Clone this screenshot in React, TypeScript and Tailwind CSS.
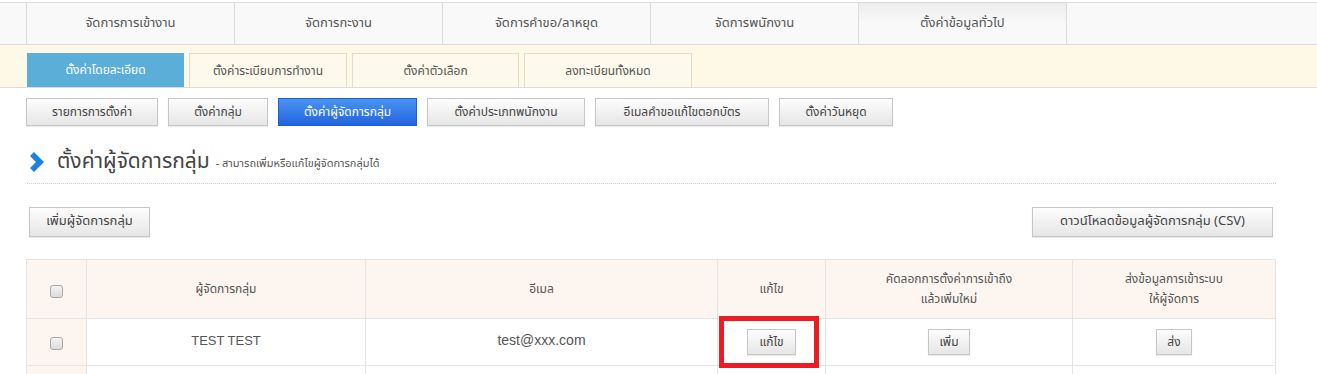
const mainTabs = [
  'จัดการการเข้างาน',
  'จัดการกะงาน',
  'จัดการคำขอ/ลาหยุด',
  'จัดการพนักงาน',
  'ตั้งค่าข้อมูลทั่วไป',
];

const subTabs = ['ตั้งค่าโดยละเอียด', 'ตั้งค่าระเบียบการทำงาน', 'ตั้งค่าตัวเลือก', 'ลงทะเบียนทั้งหมด'];
const subWidths = ['w-[157px]', 'w-[158px]', 'w-[167px]', 'w-[168px]'];

const settingBtns = [
  { label: 'รายการการตั้งค่า', w: 'w-[132px]' },
  { label: 'ตั้งค่ากลุ่ม', w: 'w-[100px]' },
  { label: 'ตั้งค่าผู้จัดการกลุ่ม', w: 'w-[139px]', active: true },
  { label: 'ตั้งค่าประเภทพนักงาน', w: 'w-[158px]' },
  { label: 'อีเมลคำขอแก้ไขตอกบัตร', w: 'w-[174px]' },
  { label: 'ตั้งค่าวันหยุด', w: 'w-[114px]' },
];

const grayBtn =
  'border border-[#c6c6c6] bg-gradient-to-b from-[#fdfdfd] to-[#e6e6e6] text-[#444] shadow-[0_1px_1px_rgba(0,0,0,0.08)]';

function Checkbox() {
  return (
    <span className="inline-block w-[13px] h-[13px] rounded-[3px] border border-[#a8a8a8] bg-gradient-to-b from-[#f4f4f4] to-[#dcdcdc]" />
  );
}

export default function App() {
  return (
    <div
      className="w-[1317px] h-[374px] overflow-hidden bg-white text-[#555]"
      style={{ fontFamily: 'Tahoma, "Noto Sans Thai", "Noto Sans", sans-serif' }}
    >
      {/* main tabs */}
      <div className="mt-[2px] h-[43px] border-t border-b border-[#dcdcdc] bg-[#f9f9f9] flex pl-[26px]">
        {mainTabs.map((t, i) => (
          <div
            key={t}
            className={`h-full flex items-center justify-center text-[13px] border-l border-[#dcdcdc] ${
              i === 4
                ? 'w-[209px] border-r bg-gradient-to-b from-[#ececec] to-[#f9f9f9] via-[#f9f9f9]'
                : 'w-[208px]'
            }`}
          >
            {t}
          </div>
        ))}
      </div>

      {/* sub tabs */}
      <div className="h-[43px] bg-[#fef8e7] border-b border-[#dcdcdc] flex items-end gap-[5px] pl-[27px]">
        {subTabs.map((t, i) => (
          <div
            key={t}
            className={`${subWidths[i]} h-[34px] flex items-center justify-center text-[12px] ${
              i === 0
                ? 'bg-[#5aaed8] text-white'
                : 'bg-[#fdf9ec] border border-b-0 border-[#e2dccb] text-[#555]'
            }`}
          >
            {t}
          </div>
        ))}
      </div>

      {/* setting buttons */}
      <div className="flex gap-[10px] pl-[26px] mt-[10px]">
        {settingBtns.map((b) => (
          <div
            key={b.label}
            className={`${b.w} h-[28px] flex items-center justify-center text-[12px] ${
              b.active
                ? 'border border-[#1d5fd3] bg-gradient-to-b from-[#4a94f2] to-[#2463de] text-white'
                : grayBtn
            }`}
          >
            {b.label}
          </div>
        ))}
      </div>

      {/* heading */}
      <div className="mx-[27px] w-[1249px] mt-[22px] pb-[7px] border-b border-dotted border-[#cfcfcf] flex items-end">
        <svg width="15" height="20" viewBox="0 0 15 20" className="ml-[3px] mb-[4px]">
          <polygon points="0,4 4,0 14,10 4,20 0,16 6,10" fill="#1a82e2" />
        </svg>
        <span className="ml-[12px] text-[21px] leading-[28px] text-[#444]">ตั้งค่าผู้จัดการกลุ่ม</span>
        <span className="ml-[6px] mb-[4px] text-[11px] text-[#555]">- สามารถเพิ่มหรือแก้ไขผู้จัดการกลุ่มได้</span>
      </div>

      {/* action buttons */}
      <div className="flex justify-between pl-[29px] pr-[44px] mt-[23px]">
        <div className={`${grayBtn} w-[121px] h-[30px] flex items-center justify-center text-[13px]`}>
          เพิ่มผู้จัดการกลุ่ม
        </div>
        <div className={`${grayBtn} w-[241px] h-[30px] flex items-center justify-center text-[13px]`}>
          ดาวน์โหลดข้อมูลผู้จัดการกลุ่ม (CSV)
        </div>
      </div>

      {/* table */}
      <table className="ml-[26px] mt-[22px] border-collapse text-[12px] text-[#555]">
        <thead>
          <tr className="h-[59px] bg-[#fdf5ef]">
            <th className="w-[60px] border border-[#e4e4e4] font-normal">
              <div className="flex justify-center pt-[4px]">
                <Checkbox />
              </div>
            </th>
            <th className="w-[279px] border border-[#e4e4e4] font-normal">ผู้จัดการกลุ่ม</th>
            <th className="w-[352px] border border-[#e4e4e4] font-normal">อีเมล</th>
            <th className="w-[108px] border border-[#e4e4e4] font-normal">แก้ไข</th>
            <th className="w-[247px] border border-[#e4e4e4] font-normal leading-[20px]">
              คัดลอกการตั้งค่าการเข้าถึง
              <br />
              แล้วเพิ่มใหม่
            </th>
            <th className="w-[203px] border border-[#e4e4e4] font-normal leading-[20px]">
              ส่งข้อมูลการเข้าระบบ
              <br />
              ให้ผู้จัดการ
            </th>
          </tr>
        </thead>
        <tbody>
          <tr className="h-[47px]">
            <td className="border border-[#e4e4e4] bg-[#fdf5ef]">
              <div className="flex justify-center pt-[2px]">
                <Checkbox />
              </div>
            </td>
            <td
              className="border border-[#e4e4e4] text-center text-[13px] pb-[3px]"
              style={{ fontFamily: 'Arial, "Liberation Sans", sans-serif' }}
            >
              TEST TEST
            </td>
            <td
              className="border border-[#e4e4e4] text-center text-[14px] pb-[3px]"
              style={{ fontFamily: 'Arial, "Liberation Sans", sans-serif' }}
            >
              test@xxx.com
            </td>
            <td className="border border-[#e4e4e4] relative">
              <div className="absolute left-[1px] top-[-3px] w-[100px] h-[52px] border-[5px] border-[#ed1c24]" />
              <div className="flex justify-center">
                <div className={`${grayBtn} w-[49px] h-[26px] flex items-center justify-center`}>แก้ไข</div>
              </div>
            </td>
            <td className="border border-[#e4e4e4]">
              <div className="flex justify-center">
                <div className={`${grayBtn} w-[42px] h-[26px] flex items-center justify-center`}>เพิ่ม</div>
              </div>
            </td>
            <td className="border border-[#e4e4e4]">
              <div className="flex justify-center">
                <div className={`${grayBtn} w-[36px] h-[26px] flex items-center justify-center`}>ส่ง</div>
              </div>
            </td>
          </tr>
          <tr className="h-[47px]">
            <td className="border border-[#e4e4e4] bg-[#fdf5ef]" />
            <td className="border border-[#e4e4e4]" />
            <td className="border border-[#e4e4e4]" />
            <td className="border border-[#e4e4e4]" />
            <td className="border border-[#e4e4e4]" />
            <td className="border border-[#e4e4e4]" />
          </tr>
        </tbody>
      </table>
    </div>
  );
}
